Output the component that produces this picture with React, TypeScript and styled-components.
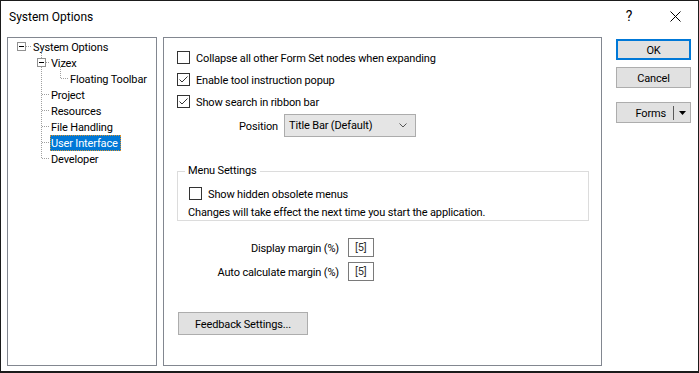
import React from 'react';
import styled, { createGlobalStyle } from 'styled-components';

const FONT = `"Segoe UI", Roboto, "Noto Sans", sans-serif`;

const Global = createGlobalStyle`
  html, body { margin: 0; padding: 0; background: #fff; }
  body { font-family: ${FONT}; font-size: 11px; letter-spacing: -0.15px; color: #000; }
  * { box-sizing: border-box; }
`;

const Window = styled.div`
  width: 699px;
  height: 373px;
  border: 1px solid #1b1b1b;
  border-bottom-width: 2px;
  background: #fff;
  display: flex;
  flex-direction: column;
  overflow: hidden;
`;

const TitleBar = styled.div`
  height: 30px;
  display: flex;
  align-items: center;
  padding-left: 8px;
`;

const Title = styled.div`
  flex: 1;
  font-size: 12px;
  letter-spacing: 0;
  margin-top: 1px;
`;

const CaptionButton = styled.div`
  width: 46px;
  height: 30px;
  display: flex;
  align-items: center;
  justify-content: center;
  font-size: 14px;
`;

const Body = styled.div`
  display: flex;
  padding: 6px 0 0 6px;
`;

const TreePanel = styled.div`
  position: relative;
  width: 150px;
  height: 329px;
  border: 1px solid #828790;
  padding-top: 1px;
`;

const TreeLines = styled.svg`
  position: absolute;
  left: 0;
  top: 0;
  pointer-events: none;
`;

const TreeRow = styled.div<{ $indent: number }>`
  height: 16px;
  display: flex;
  align-items: center;
  padding-left: ${(p) => p.$indent}px;
`;

const TreeLabel = styled.span<{ $selected?: boolean }>`
  line-height: 12px;
  padding: 2px 2px 0 0;
  border: 1px ${(p) => (p.$selected ? 'dotted #d9922e' : 'solid transparent')};
  background: ${(p) => (p.$selected ? '#0078d7' : 'transparent')};
  color: ${(p) => (p.$selected ? '#fff' : '#000')};
  white-space: nowrap;
`;

const ContentPanel = styled.div`
  width: 439px;
  height: 329px;
  margin-left: 6px;
  border: 1px solid #828790;
  padding: 8px 0 0 13px;
  display: flex;
  flex-direction: column;
  align-items: flex-start;
`;

const CheckRow = styled.label`
  height: 22px;
  display: flex;
  align-items: center;
  gap: 6px;
  white-space: nowrap;
`;

const Caption = styled.span`
  padding-top: 2px;
`;

const Box = styled.span`
  width: 13px;
  height: 13px;
  border: 1px solid #333;
  background: #fff;
  display: flex;
  align-items: center;
  justify-content: center;
  flex: none;
`;

const PositionRow = styled.div`
  margin-top: 1px;
  height: 24px;
  display: flex;
  align-items: center;
  gap: 6px;
`;

const RightLabel = styled.span<{ $width: number }>`
  width: ${(p) => p.$width}px;
  padding-top: 2px;
  text-align: right;
  white-space: nowrap;
`;

const Combo = styled.div`
  width: 132px;
  height: 23px;
  background: #e5e5e5;
  border: 1px solid #acacac;
  display: flex;
  align-items: center;
  justify-content: space-between;
  padding: 1px 8px 0 4px;
`;

const Group = styled.fieldset`
  margin: 27px 0 0 0;
  width: 412px;
  border: 1px solid #dcdcdc;
  padding: 0 0 0 7px;
  min-width: 0;
`;

const Legend = styled.legend`
  padding: 0 3px;
  line-height: 14px;
`;

const GroupBody = styled.div`
  padding-left: 4px;
  display: flex;
  flex-direction: column;
  align-items: flex-start;
`;

const GroupCheck = styled(CheckRow)`
  height: 20px;
  margin-top: 5px;
`;

const Note = styled.div`
  height: 17px;
  line-height: 17px;
  padding-top: 1px;
  margin-left: -1px;
  white-space: nowrap;
`;

const MarginRow = styled.div<{ $top: number }>`
  margin-top: ${(p) => p.$top}px;
  height: 20px;
  display: flex;
  align-items: center;
  gap: 9px;
`;

const ValueBox = styled.div`
  width: 26px;
  height: 19px;
  border: 1px solid #7a7a7a;
  padding: 1px 0 0 6px;
  line-height: 16px;
  color: #333;
`;

const Button = styled.div<{ $default?: boolean }>`
  width: 75px;
  height: 21px;
  background: #e1e1e1;
  border: ${(p) => (p.$default ? '2px solid #0078d7' : '1px solid #adadad')};
  display: flex;
  align-items: center;
  justify-content: center;
  padding-top: 1px;
  white-space: nowrap;
`;

const FeedbackButton = styled(Button)`
  width: 130px;
  height: 23px;
  margin: 31px 0 0 1px;
`;

const SideColumn = styled.div`
  margin-left: 14px;
  padding-top: 2px;
  display: flex;
  flex-direction: column;
  gap: 7px;
`;

const SplitButton = styled(Button)`
  margin-top: 7px;
  justify-content: flex-end;
  padding: 0;
`;

const SplitLabel = styled.span`
  margin-right: 7px;
  padding-top: 1px;
`;

const SplitDivider = styled.span`
  width: 1px;
  height: 14px;
  background: #5a5a5a;
`;

const SplitArrow = styled.span`
  width: 16px;
  display: flex;
  align-items: center;
  justify-content: center;
`;

const Check = ({ checked }: { checked?: boolean }) => (
  <Box>
    {checked && (
      <svg width="11" height="11" viewBox="0 0 11 11">
        <path d="M1.5 5.5 L4 8 L9.5 2.5" fill="none" stroke="#333" strokeWidth="1" />
      </svg>
    )}
  </Box>
);

const dot = { stroke: '#a0a0a0', strokeDasharray: '1 1', shapeRendering: 'crispEdges' as const };

const tree = [
  { label: 'System Options', indent: 24 },
  { label: 'Vizex', indent: 42 },
  { label: 'Floating Toolbar', indent: 61 },
  { label: 'Project', indent: 42 },
  { label: 'Resources', indent: 42 },
  { label: 'File Handling', indent: 42 },
  { label: 'User Interface', indent: 42, selected: true },
  { label: 'Developer', indent: 42 },
];

export default function App() {
  const tickRows = [25, 57, 73, 89, 105, 121];
  return (
    <>
      <Global />
      <Window>
        <TitleBar>
          <Title>System Options</Title>
          <CaptionButton>?</CaptionButton>
          <CaptionButton>
            <svg width="11" height="11" viewBox="0 0 11 11">
              <path d="M0.5 0.5 L10.5 10.5 M10.5 0.5 L0.5 10.5" stroke="#000" strokeWidth="1" />
            </svg>
          </CaptionButton>
        </TitleBar>
        <Body>
          <TreePanel>
            <TreeLines width="148" height="327">
              <line x1="18" y1="8.5" x2="23" y2="8.5" style={dot} />
              <line x1="33.5" y1="13" x2="33.5" y2="121" style={dot} />
              {tickRows.map((y) => (
                <line key={y} x1="34" y1={y - 0.5} x2="41" y2={y - 0.5} style={dot} />
              ))}
              <line x1="52.5" y1="29" x2="52.5" y2="41" style={dot} />
              <line x1="53" y1="40.5" x2="60" y2="40.5" style={dot} />
              <rect x="9.5" y="4.5" width="8" height="8" fill="#fff" stroke="#919191" shapeRendering="crispEdges" />
              <line x1="11" y1="8.5" x2="16" y2="8.5" stroke="#000" shapeRendering="crispEdges" />
              <rect x="29.5" y="20.5" width="8" height="8" fill="#fff" stroke="#919191" shapeRendering="crispEdges" />
              <line x1="31" y1="24.5" x2="36" y2="24.5" stroke="#000" shapeRendering="crispEdges" />
            </TreeLines>
            {tree.map((n) => (
              <TreeRow key={n.label} $indent={n.indent}>
                <TreeLabel $selected={n.selected}>{n.label}</TreeLabel>
              </TreeRow>
            ))}
          </TreePanel>
          <ContentPanel>
            <CheckRow>
              <Check />
              <Caption>Collapse all other Form Set nodes when expanding</Caption>
            </CheckRow>
            <CheckRow>
              <Check checked />
              <Caption>Enable tool instruction popup</Caption>
            </CheckRow>
            <CheckRow>
              <Check checked />
              <Caption>Show search in ribbon bar</Caption>
            </CheckRow>
            <PositionRow>
              <RightLabel $width={101}>Position</RightLabel>
              <Combo>
                <span>Title Bar (Default)</span>
                <svg width="8" height="5" viewBox="0 0 8 5">
                  <path d="M0.5 0.5 L4 4 L7.5 0.5" fill="none" stroke="#555" strokeWidth="1" />
                </svg>
              </Combo>
            </PositionRow>
            <Group>
              <Legend>Menu Settings</Legend>
              <GroupBody>
                <GroupCheck>
                  <Check />
                  <Caption>Show hidden obsolete menus</Caption>
                </GroupCheck>
                <Note>Changes will take effect the next time you start the application.</Note>
              </GroupBody>
            </Group>
            <MarginRow $top={16}>
              <RightLabel $width={162}>Display margin (%)</RightLabel>
              <ValueBox>[5]</ValueBox>
            </MarginRow>
            <MarginRow $top={4}>
              <RightLabel $width={162}>Auto calculate margin (%)</RightLabel>
              <ValueBox>[5]</ValueBox>
            </MarginRow>
            <FeedbackButton>Feedback Settings...</FeedbackButton>
          </ContentPanel>
          <SideColumn>
            <Button $default>OK</Button>
            <Button>Cancel</Button>
            <SplitButton>
              <SplitLabel>Forms</SplitLabel>
              <SplitDivider />
              <SplitArrow>
                <svg width="7" height="4" viewBox="0 0 7 4">
                  <path d="M0 0 L7 0 L3.5 4 Z" fill="#000" />
                </svg>
              </SplitArrow>
            </SplitButton>
          </SideColumn>
        </Body>
      </Window>
    </>
  );
}
